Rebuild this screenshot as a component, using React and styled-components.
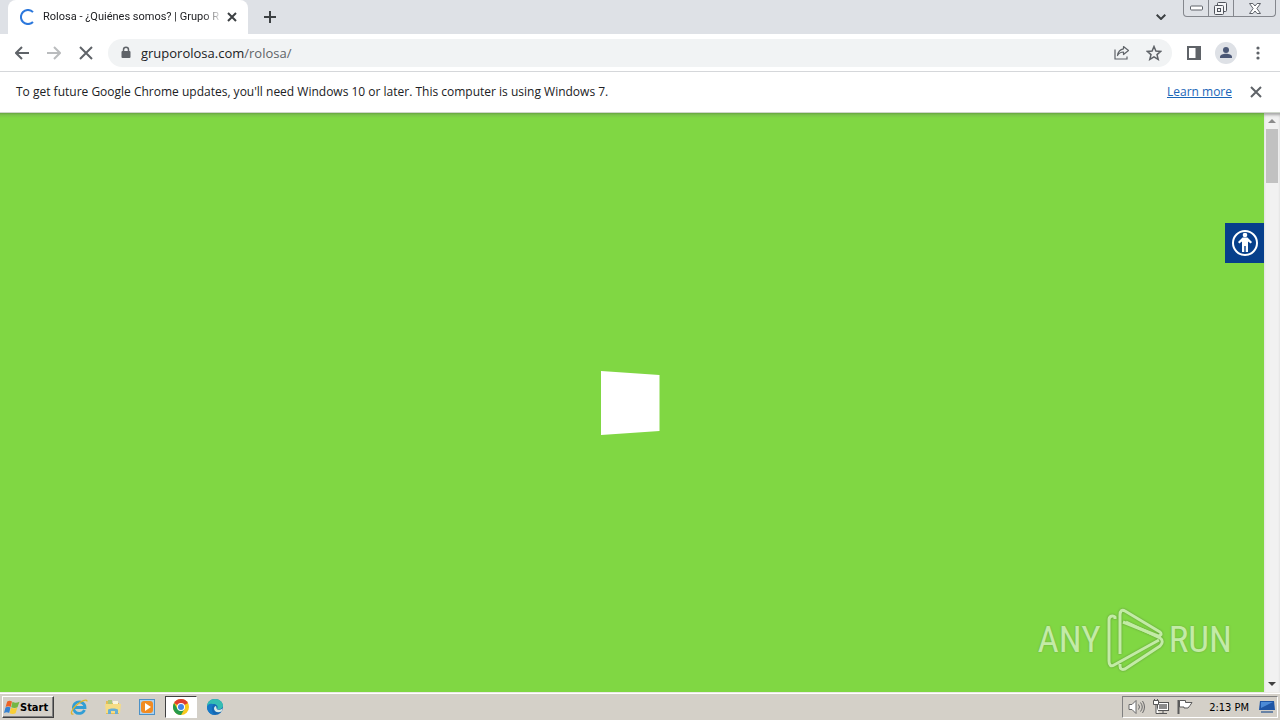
import styled, { createGlobalStyle } from 'styled-components';

const GlobalStyle = createGlobalStyle`
  * {
    box-sizing: border-box;
  }
  body {
    margin: 0;
    overflow: hidden;
    font-family: 'Open Sans', 'Noto Sans', sans-serif;
    color: #202124;
  }
  button {
    font-family: inherit;
    border: 0;
    padding: 0;
    background: none;
  }
  svg {
    display: block;
  }
`;

const Desktop = styled.div`
  height: 100vh;
  display: flex;
  flex-direction: column;
`;

const TabStrip = styled.header`
  height: 34px;
  flex: none;
  display: flex;
  align-items: flex-start;
  background: #dee1e6;
  padding-left: 8px;
`;

const Tab = styled.div`
  width: 240px;
  height: 34px;
  display: flex;
  align-items: center;
  padding: 0 8px 0 12px;
  background: white;
  border-radius: 8px 8px 0 0;
`;

const TabTitle = styled.span`
  flex: 1;
  min-width: 0;
  margin: 0 4px 0 7px;
  overflow: hidden;
  white-space: nowrap;
  font-family: Roboto, sans-serif;
  font-size: 11px;
  line-height: 16px;
  mask-image: linear-gradient(to right, black 160px, transparent 180px);
`;

const IconButton = styled.button`
  flex: none;
  width: ${({ $width }) => $width || 16}px;
  height: ${({ $height }) => $height || 16}px;
  display: flex;
  align-items: center;
  justify-content: center;
  color: ${({ $color }) => $color || '#5f6368'};
`;

const Spacer = styled.div`
  flex: 1;
`;

const WindowControls = styled.div`
  display: flex;
  width: 93px;
  height: 17px;
  margin: 0 4px 0 6px;
  border: 1px solid #84878d;
  border-top: 0;
  border-radius: 0 0 4px 4px;

  button + button {
    border-left: 1px solid #84878d;
  }
`;

const Toolbar = styled.nav`
  height: 38px;
  flex: none;
  display: flex;
  align-items: center;
  padding: 0 6px;
  background: white;
  border-bottom: 1px solid #d5d7da;
`;

const AddressBar = styled.div`
  flex: 1;
  height: 28px;
  display: flex;
  align-items: center;
  margin: 0 6px;
  padding: 0 2px 0 12px;
  background: #f1f3f4;
  border-radius: 14px;
`;

const Address = styled.span`
  flex: 1;
  margin-left: 9px;
  font-size: 13px;
  line-height: 20px;
  color: #5f6368;

  b {
    font-weight: 400;
    color: #202124;
  }
`;

const Avatar = styled.span`
  width: 22px;
  height: 22px;
  border-radius: 50%;
  background: #dee1e6;
`;

const InfoBar = styled.div`
  height: 41px;
  flex: none;
  display: flex;
  align-items: center;
  padding: 0 16px;
  background: white;
  border-bottom: 1px solid #cfd6cb;
  font-size: 12px;
  line-height: 16px;

  p {
    flex: 1;
    margin: 0;
  }
  a {
    margin-right: 16px;
    color: #1a66b8;
  }
`;

const Viewport = styled.main`
  flex: 1;
  min-height: 0;
  display: flex;
`;

const Page = styled.section`
  flex: 1;
  position: relative;
  display: flex;
  align-items: center;
  justify-content: center;
  background: linear-gradient(#67a53f, #7bc44a 2px, #80d743 5px) #80d743;
`;

const Spinner = styled.svg`
  margin-right: 4px;
`;

const AccessibilityButton = styled.button`
  position: absolute;
  top: 110px;
  right: 0;
  width: 39px;
  height: 40px;
  display: flex;
  align-items: center;
  justify-content: center;
  background: #063f8b;
`;

const Watermark = styled.div`
  position: absolute;
  right: 32px;
  bottom: 20px;
  display: flex;
  align-items: center;
  gap: 5px;
  color: #c3eba6;
  font-family: 'Roboto Condensed', 'Liberation Sans Narrow', Roboto, sans-serif;
  font-size: 37px;
  font-weight: 400;
  line-height: 64px;
  text-shadow: 0 0 2px #6aa044;
`;

const ScrollTrack = styled.div`
  width: 16px;
  display: flex;
  flex-direction: column;
  align-items: center;
  justify-content: space-between;
  background: #f1f1f1;
  box-shadow: inset 0 3px 3px -1px #a5a5a5;
`;

const ScrollThumb = styled.div`
  width: 12px;
  height: 54px;
  background: #c1c1c1;
`;

const Taskbar = styled.footer`
  height: 28px;
  flex: none;
  display: flex;
  align-items: center;
  padding: 1px 2px 0;
  background: #d4d0c8;
  border-top: 1px solid #eceae6;
  box-shadow: inset 0 1px white;
`;

const StartButton = styled.button`
  width: 52px;
  height: 22px;
  display: flex;
  align-items: center;
  padding-left: 1px;
  margin-right: 9px;
  background: #d4d0c8;
  border: 1px solid;
  border-color: white #404040 #404040 white;
  box-shadow: inset -1px -1px #808080;
  color: black;
  font-family: 'DejaVu Sans Condensed', 'DejaVu Sans', sans-serif;
  font-size: 11px;
  font-weight: 700;
`;

const TaskButton = styled.button`
  width: 32px;
  height: 22px;
  margin-right: 2px;
  display: flex;
  align-items: center;
  justify-content: center;
  background: ${({ $active }) => ($active ? 'white' : 'none')};
  border: 1px solid;
  border-color: ${({ $active }) => ($active ? '#404040 white white #404040' : 'transparent')};
`;

const Tray = styled.div`
  height: 22px;
  display: flex;
  align-items: center;
  gap: 8px;
  padding: 0 2px 0 5px;
  border: 1px solid;
  border-color: #808080 white white #808080;
`;

const Clock = styled.time`
  margin: 0 2px 0 8px;
  color: black;
  font-family: 'DejaVu Sans Condensed', 'DejaVu Sans', sans-serif;
  font-size: 11px;
  white-space: nowrap;
`;

const CrossIcon = ({ size = 8, stroke = 2 }) => (
  <svg width={size} height={size} viewBox="0 0 8 8" overflow="visible">
    <path d="M0 0L8 8M8 0L0 8" stroke="currentColor" strokeWidth={(stroke * 8) / size} />
  </svg>
);

const ArrowIcon = ({ flip }) => (
  <svg width="14" height="14" viewBox="0 0 14 14" fill="none" stroke="currentColor" strokeWidth="2">
    <path d={flip ? 'M0 7H13M7 1l6 6-6 6' : 'M14 7H1M7 1L1 7l6 6'} />
  </svg>
);

const LoadingIcon = () => (
  <svg width="16" height="16" viewBox="0 0 16 16" fill="none" stroke="#2c78dc" strokeWidth="2">
    <path d="M13 3.1A7 7 0 1 0 13 13" />
  </svg>
);

const PlusIcon = () => (
  <svg width="12" height="12" viewBox="0 0 12 12" stroke="#3c4043" strokeWidth="2">
    <path d="M6 0V12M0 6H12" />
  </svg>
);

const ChevronIcon = () => (
  <svg width="10" height="6" viewBox="0 0 10 6" fill="none" stroke="#3c4043" strokeWidth="2">
    <path d="M.7.7L5 5 9.3.7" />
  </svg>
);

const MinimizeIcon = () => (
  <svg width="13" height="6" viewBox="0 0 13 6">
    <rect x=".5" y="1" width="12" height="4" rx="1" fill="white" stroke="#5e6269" />
  </svg>
);

const RestoreIcon = () => (
  <svg width="14" height="13" viewBox="0 0 14 13" fill="#f4f5f7" stroke="#4f535b">
    <rect x="3.5" y=".5" width="9" height="9" rx="1" />
    <rect x=".5" y="3.5" width="9" height="9" rx="1" />
    <rect x="3.5" y="6.5" width="3" height="3" />
  </svg>
);

const CloseWindowIcon = () => (
  <svg width="12" height="11" viewBox="0 0 12 11">
    <path
      d="M.5.5h3.4L6 3 8.1.5h3.4L7.9 5.5l3.6 5H8.1L6 8l-2.1 2.5H.5l3.6-5z"
      fill="white"
      stroke="#5e6269"
    />
  </svg>
);

const LockIcon = () => (
  <svg width="12" height="14" viewBox="0 0 12 14">
    <path d="M3.5 6V3.7a2.5 2.5 0 0 1 5 0V6" fill="none" stroke="#5f6368" strokeWidth="1.5" />
    <rect x="1.5" y="5" width="9" height="7" rx="1" fill="#5f6368" />
  </svg>
);

const ShareIcon = () => (
  <svg width="16" height="15" viewBox="0 0 16 15" fill="none" stroke="#5f6368" strokeWidth="1.2">
    <path d="M1 4.5V14H13V11.5" />
    <path d="M9.5 1.5L14.5 5.5l-5 4V7C7 7 5 8 3.5 10.5 4 7 6 4.3 9.5 3.8z" strokeLinejoin="round" />
  </svg>
);

const StarIcon = () => (
  <svg width="16" height="16" viewBox="0 0 16 16">
    <path
      d="M8 1.5l1.9 4.5 4.8.4-3.7 3.2 1.2 4.8L8 11.8l-4.2 2.6L5 9.6 1.3 6.4l4.8-.4z"
      fill="none"
      stroke="#5f6368"
      strokeWidth="1.5"
    />
  </svg>
);

const SidePanelIcon = () => (
  <svg width="14" height="14" viewBox="0 0 14 14">
    <path d="M1 1H13V13H1z" fill="none" stroke="#5f6368" strokeWidth="2" />
    <path d="M8.5 1H13V13H8.5z" fill="#5f6368" />
  </svg>
);

const PersonIcon = () => (
  <svg width="22" height="22" viewBox="0 0 22 22" fill="#4b5876">
    <circle cx="11" cy="8" r="3" />
    <path d="M5 16v-1c0-2 3-3.2 6-3.2s6 1.2 6 3.2v1z" />
  </svg>
);

const MoreIcon = () => (
  <svg width="4" height="14" viewBox="0 0 4 14" fill="#5f6368">
    <circle cx="2" cy="2" r="1.6" />
    <circle cx="2" cy="7" r="1.6" />
    <circle cx="2" cy="12" r="1.6" />
  </svg>
);

const AccessibilityIcon = () => (
  <svg width="28" height="28" viewBox="0 0 28 28">
    <circle cx="14" cy="14" r="12" fill="none" stroke="white" strokeWidth="2" />
    <circle cx="14" cy="6" r="2.3" fill="white" />
    <path
      d="M11.5 8.5h5l4.5 4.5-1.3 1.5-2.7-2V23h-2.3v-6h-1.4v6H11V12.500l-2.7 2L7 13z"
      fill="white"
    />
  </svg>
);

const PlayLogo = () => (
  <svg
    width="58"
    height="64"
    viewBox="0 0 58 64"
    fill="none"
    stroke="#c3eba6"
    strokeWidth="3"
    strokeLinejoin="round"
    style={{ filter: 'drop-shadow(0 0 1px #5f993b)' }}
  >
    <path d="M9 11V9c-2-2-6-1-6 3v41c0 4 2 6 5 4l45-25" />
    <path d="M14 46V7c0-4 2-6 5-4l35 21c2 2 1 4-2 4L17 14" />
    <path d="M14 56v2c0 3 2 4 5 3l35-23c3-3 3-6 0-8L20 14" />
  </svg>
);

const ScrollArrow = ({ down }) => (
  <svg width="8" height="4" viewBox="0 0 8 4">
    <path d={down ? 'M0 0H8L4 4z' : 'M0 4H8L4 0z'} fill={down ? '#404040' : '#8b8b8b'} />
  </svg>
);

const WindowsIcon = () => (
  <svg width="16" height="16" viewBox="0 0 16 15">
    <path d="M3.2 2C5 .8 6.5 1 8 2L6.7 7.5C5 6.5 3.6 6.5 1.6 7.5z" fill="#ed6325" />
    <path d="M8.5 2.3c2 1.2 4 1.2 7 0l-2 5.5c-2 1-4.3.8-6.3 0z" fill="#74b743" />
    <path d="M1.5 8c2-1 3.5-.8 5 0l-1.3 5.5C3.5 12.5 2 12.5 0 13.5z" fill="#3682d1" />
    <path d="M7 8.3c2 1 4 1 6.3 0l-1.7 5.500c-2 1-4 .8-6 0z" fill="#f8ce35" />
  </svg>
);

const ExplorerIcon = () => (
  <svg width="18" height="16" viewBox="0 0 18 16" fill="none">
    <path d="M14.5 11a5.8 5.8 0 1 1 .5-2.5H4" stroke="#329ed5" strokeWidth="2.8" />
    <path d="M3.5 15C0 16 1 11 6 6.5S17-.5 17 2.5" stroke="#e0b52c" strokeWidth="1.3" />
  </svg>
);

const FolderIcon = () => (
  <svg width="16" height="16" viewBox="0 0 16 16">
    <path d="M1 2h5l1 2h7v11H1z" fill="#e4bd55" />
    <path d="M3 1h4v5H3z" fill="#a9c77c" />
    <path d="M8 2h5v4H8z" fill="#f8f5dd" />
    <path d="M0 5h16l-1 9H1z" fill="#f5dc85" />
    <path d="M3 15v-4c0-2 10-2 10 0v4h-3v-3H6v3z" fill="#67aed4" />
  </svg>
);

const MediaIcon = () => (
  <svg width="16" height="16" viewBox="0 0 16 16">
    <rect x=".5" y=".5" width="15" height="15" fill="#acd1ef" stroke="#4c91c6" />
    <rect x="2" y="2" width="12" height="12" rx="3" fill="#f18b22" />
    <path d="M6 4v8L12 8z" fill="white" />
  </svg>
);

const ChromeIcon = () => (
  <svg width="16" height="16" viewBox="0 0 16 16">
    <circle cx="8" cy="8" r="8" fill="#f9c91d" />
    <path d="M8 8L1.07 4A8 8 0 0 1 14.93 4z" fill="#df3e30" />
    <path d="M1.07 4A8 8 0 0 0 8 16l3.5-6H4.5z" fill="#269a4b" />
    <circle cx="8" cy="8" r="4" fill="white" />
    <circle cx="8" cy="8" r="3" fill="#4285e8" />
  </svg>
);

const EdgeIcon = () => (
  <svg width="16" height="16" viewBox="0 0 16 16">
    <circle cx="8" cy="8" r="8" fill="#1468b4" />
    <path d="M0 8C0 3 3 0 8 0s8 3.5 8 6.5-3 4.5-6 3.5c2-3-1-5-4-5S1 6 0 8z" fill="#35bdb3" />
    <path d="M9.5 9c0 2 3 2.5 6.3.5l-1.3 3C11 14 7 13 7 9.5 7 8 8 7 9 7z" fill="#d9eae7" />
    <path d="M0 8c1-4 5-4 7-2-3 1-3 7 1 10-5 0-8-4-8-8z" fill="#1679c7" />
  </svg>
);

const SpeakerIcon = () => (
  <svg width="17" height="16" viewBox="0 0 17 16" fill="none" stroke="#696969">
    <path d="M1 5.5h3l4-4v13l-4-4H1z" fill="white" />
    <path d="M10.5 5.5q2 2.5 0 5M12.5 3.5q3.5 4.5 0 9M14.5 2q4 6 0 12" />
  </svg>
);

const NetworkIcon = () => (
  <svg width="16" height="16" viewBox="0 0 16 16" stroke="#555" fill="white">
    <rect x="4.5" y="3.5" width="11" height="8" />
    <rect x="6" y="5" width="8" height="5" fill="#8b8b8b" stroke="none" />
    <path d="M10 12v2M6 14.5h8" />
    <path d="M.5 1.5h5v4h-5zM1.5 0v2M4.5 0v2M3 6v8.5h3" />
  </svg>
);

const FlagIcon = () => (
  <svg width="16" height="16" viewBox="0 0 16 16" stroke="#5b5b5b" fill="white">
    <path d="M2.5 1.5h6v2h6.5l-2 3-2 2.5h-4v-1h-4.5z" />
    <path d="M1.5 1v14" strokeWidth="2" />
  </svg>
);

const MonitorIcon = () => (
  <svg width="16" height="14" viewBox="0 0 16 14">
    <path d="M1 1h14l1 9H0z" fill="#1e55a5" />
    <path d="M2 2h12L2 8z" fill="#4b8ad6" />
    <path d="M2 12h12" stroke="#6983a5" strokeWidth="2" />
  </svg>
);

const Browser = () => (
  <>
    <TabStrip>
      <Tab>
        <LoadingIcon />
        <TabTitle>Rolosa - ¿Quiénes somos? | Grupo R</TabTitle>
        <IconButton aria-label="Close tab" $color="#3c4043">
          <CrossIcon />
        </IconButton>
      </Tab>
      <IconButton aria-label="New tab" $width={44} $height={34}>
        <PlusIcon />
      </IconButton>
      <Spacer />
      <IconButton aria-label="Search tabs" $width={32} $height={34}>
        <ChevronIcon />
      </IconButton>
      <WindowControls>
        <IconButton aria-label="Minimize" $width={24}>
          <MinimizeIcon />
        </IconButton>
        <IconButton aria-label="Restore" $width={25}>
          <RestoreIcon />
        </IconButton>
        <IconButton aria-label="Close window" $width={42}>
          <CloseWindowIcon />
        </IconButton>
      </WindowControls>
    </TabStrip>
    <Toolbar>
      <IconButton aria-label="Back" $width={32}>
        <ArrowIcon />
      </IconButton>
      <IconButton aria-label="Forward" $width={32} $color="#babcbe">
        <ArrowIcon flip />
      </IconButton>
      <IconButton aria-label="Stop" $width={32}>
        <CrossIcon size={12} />
      </IconButton>
      <AddressBar>
        <LockIcon />
        <Address>
          <b>gruporolosa.com</b>/rolosa/
        </Address>
        <IconButton aria-label="Share" $width={32}>
          <ShareIcon />
        </IconButton>
        <IconButton aria-label="Bookmark" $width={32}>
          <StarIcon />
        </IconButton>
      </AddressBar>
      <IconButton aria-label="Side panel" $width={32}>
        <SidePanelIcon />
      </IconButton>
      <IconButton aria-label="Profile" $width={32} $height={28}>
        <Avatar>
          <PersonIcon />
        </Avatar>
      </IconButton>
      <IconButton aria-label="More" $width={32}>
        <MoreIcon />
      </IconButton>
    </Toolbar>
    <InfoBar>
      <p>To get future Google Chrome updates, you'll need Windows 10 or later. This computer is using Windows 7.</p>
      <a href="#learn-more">Learn more</a>
      <IconButton aria-label="Dismiss">
        <CrossIcon size={10} />
      </IconButton>
    </InfoBar>
  </>
);

const App = () => (
  <Desktop>
    <GlobalStyle />
    <Browser />
    <Viewport>
      <Page>
        <Spinner width="60" height="64" viewBox="0 0 60 64">
          <path d="M1 0L59.5 4V60L1 64z" fill="white" />
        </Spinner>
        <AccessibilityButton aria-label="Accessibility">
          <AccessibilityIcon />
        </AccessibilityButton>
        <Watermark>
          <span>ANY</span>
          <PlayLogo />
          <span>RUN</span>
        </Watermark>
      </Page>
      <ScrollTrack>
        <IconButton aria-label="Scroll up">
          <ScrollArrow />
        </IconButton>
        <ScrollThumb />
        <Spacer />
        <IconButton aria-label="Scroll down">
          <ScrollArrow down />
        </IconButton>
      </ScrollTrack>
    </Viewport>
    <Taskbar>
      <StartButton>
        <WindowsIcon />
        Start
      </StartButton>
      <TaskButton aria-label="Internet Explorer">
        <ExplorerIcon />
      </TaskButton>
      <TaskButton aria-label="File Explorer">
        <FolderIcon />
      </TaskButton>
      <TaskButton aria-label="Media Player">
        <MediaIcon />
      </TaskButton>
      <TaskButton aria-label="Chrome" $active>
        <ChromeIcon />
      </TaskButton>
      <TaskButton aria-label="Edge">
        <EdgeIcon />
      </TaskButton>
      <Spacer />
      <Tray>
        <SpeakerIcon />
        <NetworkIcon />
        <FlagIcon />
        <Clock>2:13 PM</Clock>
        <MonitorIcon />
      </Tray>
    </Taskbar>
  </Desktop>
);

export default App;
